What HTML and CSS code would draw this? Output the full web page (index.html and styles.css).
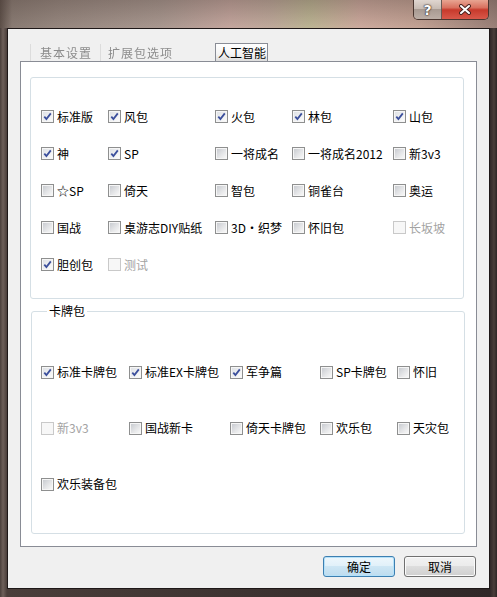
FILE: index.html
```html
<!DOCTYPE html>
<html lang="zh-CN">
<head>
    <meta charset="UTF-8">
    <title>选项</title>
    <link rel="stylesheet" href="styles.css">
</head>
<body>

<div class="window">
    <!-- 标题栏 -->
    <div class="titlebar">
        <div class="caption-buttons">
            <span class="cap help">?</span>
            <span class="cap close">
                <svg width="14" height="11" viewBox="0 0 14 11">
                    <path d="M3 2 L11 9 M11 2 L3 9" stroke="#4a2420" stroke-width="4" stroke-linecap="round"/>
                    <path d="M3 2 L11 9 M11 2 L3 9" stroke="#ffffff" stroke-width="2" stroke-linecap="round"/>
                </svg>
            </span>
        </div>
    </div>

    <div class="client">
        <!-- 标签页 -->
        <div class="tabs">
            <div class="tab ghost first">基本设置</div>
            <div class="tab ghost second">扩展包选项</div>
            <div class="tab current">人工智能</div>
        </div>

        <div class="pane">
            <!-- 扩展包 -->
            <div class="group packs">
                <label class="check on"><span class="box"><svg width="9" height="9" viewBox="0 0 9 9"><path d="M1.3 4.6 L3.4 7 L7.8 1.4" fill="none" stroke="#3b4f9c" stroke-width="1.8"/></svg></span>标准版</label>
                <label class="check on"><span class="box"><svg width="9" height="9" viewBox="0 0 9 9"><path d="M1.3 4.6 L3.4 7 L7.8 1.4" fill="none" stroke="#3b4f9c" stroke-width="1.8"/></svg></span>风包</label>
                <label class="check on"><span class="box"><svg width="9" height="9" viewBox="0 0 9 9"><path d="M1.3 4.6 L3.4 7 L7.8 1.4" fill="none" stroke="#3b4f9c" stroke-width="1.8"/></svg></span>火包</label>
                <label class="check on"><span class="box"><svg width="9" height="9" viewBox="0 0 9 9"><path d="M1.3 4.6 L3.4 7 L7.8 1.4" fill="none" stroke="#3b4f9c" stroke-width="1.8"/></svg></span>林包</label>
                <label class="check on"><span class="box"><svg width="9" height="9" viewBox="0 0 9 9"><path d="M1.3 4.6 L3.4 7 L7.8 1.4" fill="none" stroke="#3b4f9c" stroke-width="1.8"/></svg></span>山包</label>

                <label class="check on"><span class="box"><svg width="9" height="9" viewBox="0 0 9 9"><path d="M1.3 4.6 L3.4 7 L7.8 1.4" fill="none" stroke="#3b4f9c" stroke-width="1.8"/></svg></span>神</label>
                <label class="check on"><span class="box"><svg width="9" height="9" viewBox="0 0 9 9"><path d="M1.3 4.6 L3.4 7 L7.8 1.4" fill="none" stroke="#3b4f9c" stroke-width="1.8"/></svg></span>SP</label>
                <label class="check"><span class="box"></span>一将成名</label>
                <label class="check"><span class="box"></span>一将成名2012</label>
                <label class="check"><span class="box"></span>新3v3</label>

                <label class="check"><span class="box"></span>☆SP</label>
                <label class="check"><span class="box"></span>倚天</label>
                <label class="check"><span class="box"></span>智包</label>
                <label class="check"><span class="box"></span>铜雀台</label>
                <label class="check"><span class="box"></span>奥运</label>

                <label class="check"><span class="box"></span>国战</label>
                <label class="check"><span class="box"></span>桌游志DIY贴纸</label>
                <label class="check"><span class="box"></span>3D・织梦</label>
                <label class="check"><span class="box"></span>怀旧包</label>
                <label class="check disabled"><span class="box"></span>长坂坡</label>

                <label class="check on"><span class="box"><svg width="9" height="9" viewBox="0 0 9 9"><path d="M1.3 4.6 L3.4 7 L7.8 1.4" fill="none" stroke="#3b4f9c" stroke-width="1.8"/></svg></span>胆创包</label>
                <label class="check disabled"><span class="box"></span>测试</label>
            </div>

            <!-- 卡牌包 -->
            <fieldset class="group cards">
                <legend>卡牌包</legend>
                <label class="check on"><span class="box"><svg width="9" height="9" viewBox="0 0 9 9"><path d="M1.3 4.6 L3.4 7 L7.8 1.4" fill="none" stroke="#3b4f9c" stroke-width="1.8"/></svg></span>标准卡牌包</label>
                <label class="check on"><span class="box"><svg width="9" height="9" viewBox="0 0 9 9"><path d="M1.3 4.6 L3.4 7 L7.8 1.4" fill="none" stroke="#3b4f9c" stroke-width="1.8"/></svg></span>标准EX卡牌包</label>
                <label class="check on"><span class="box"><svg width="9" height="9" viewBox="0 0 9 9"><path d="M1.3 4.6 L3.4 7 L7.8 1.4" fill="none" stroke="#3b4f9c" stroke-width="1.8"/></svg></span>军争篇</label>
                <label class="check"><span class="box"></span>SP卡牌包</label>
                <label class="check"><span class="box"></span>怀旧</label>

                <label class="check disabled"><span class="box"></span>新3v3</label>
                <label class="check"><span class="box"></span>国战新卡</label>
                <label class="check"><span class="box"></span>倚天卡牌包</label>
                <label class="check"><span class="box"></span>欢乐包</label>
                <label class="check"><span class="box"></span>天灾包</label>

                <label class="check"><span class="box"></span>欢乐装备包</label>
            </fieldset>
        </div>

        <div class="buttons">
            <button class="btn default">确定</button>
            <button class="btn">取消</button>
        </div>
    </div>
</div>

</body>
</html>
```

FILE: styles.css
```css
/* 基本样式 */
body {
    margin: 0;
    padding: 0;
    font-family: "Noto Sans CJK SC", "DejaVu Sans", sans-serif;
    font-size: 12px;
    background: #2a2322;
}

/* 窗口外框 */
.window {
    width: 497px;
    height: 597px;
    box-sizing: border-box;
    padding: 0 7px 8px 7px;
    display: flex;
    flex-direction: column;
    background:
        linear-gradient(to bottom, rgba(70, 55, 50, 0.3), rgba(255, 255, 255, 0) 28px) 0 0 / 100% 28px no-repeat,
        linear-gradient(to right, #5c4f48 0, #8a7c74 12px, #978880 60px, #a99890 160px, #c4a69e 230px, #c0aa9c 270px, #bdb594 310px, #cdaa9e 360px, #c3a294 420px, #9a8078 497px) 0 0 / 100% 28px no-repeat,
        linear-gradient(to right, #4a3f3b 0, #6e605a 3px, #4a3e3a 7px, #302828 490px, #4a3e3a 494px, #2e2626 497px);
}

.titlebar {
    height: 28px;
    display: flex;
    justify-content: flex-end;
    align-items: flex-start;
    padding-right: 1px;
}

.caption-buttons {
    display: flex;
    height: 19px;
    border: 1px solid #4a3630;
    border-top: none;
    border-radius: 0 0 5px 5px;
    overflow: hidden;
}

.cap {
    display: flex;
    align-items: center;
    justify-content: center;
    height: 19px;
}

.help {
    width: 27px;
    border-right: 1px solid #6a5a54;
    background: linear-gradient(to bottom, #e0d6d0 0, #c8bcb4 45%, #a89a92 50%, #bcaea6 100%);
    color: #fff;
    font-family: "DejaVu Sans", sans-serif;
    font-weight: bold;
    font-size: 14px;
    text-shadow: 0 0 1px #3a2a26, 0 0 1px #3a2a26, 0 0 2px #3a2a26;
}

.close {
    width: 46px;
    background: linear-gradient(to bottom, #e8a592 0, #d9715f 40%, #c73a2c 52%, #d9584a 100%);
}

/* 客户区 */
.client {
    flex: 1;
    background: #f0f0f0;
    border: 1px solid #1e1818;
    padding: 14px 12px 11px 12px;
    display: flex;
    flex-direction: column;
}

/* 标签页 */
.tabs {
    display: flex;
    height: 18px;
    align-items: flex-end;
}

.tab {
    height: 17px;
    line-height: 17px;
    box-sizing: border-box;
    white-space: nowrap;
}

.tab.ghost {
    color: #8c8c8c;
    filter: blur(0.5px);
    border-left: 1px solid #dcdcdc;
    padding-left: 9px;
    letter-spacing: 1px;
}

.tab.first {
    margin-left: 10px;
    width: 70px;
}

.tab.second {
    width: 114px;
    padding-left: 7px;
}

.tab.current {
    width: 53px;
    height: 18px;
    line-height: 17px;
    margin-left: 1px;
    padding-left: 2px;
    border: 1px solid #898c95;
    border-bottom: none;
    background: linear-gradient(to bottom, #ffffff 0, #f4f4f4 60%, #dcdcdc 100%);
    color: #000;
}

.pane {
    height: 486px;
    box-sizing: border-box;
    background: #ffffff;
    border: 1px solid #898c95;
    padding: 15px 12px 12px 9px;
    display: flex;
    flex-direction: column;
}

/* 分组框 */
.group {
    border: 1px solid #d5dfe5;
    border-radius: 3px;
    box-shadow: inset 1px 1px 0 #ffffff;
    margin: 0;
    min-width: 0;
    display: grid;
    align-items: center;
}

.packs {
    height: 222px;
    box-sizing: border-box;
    padding: 20px 0 15px 10px;
    grid-template-columns: 67px 107px 77px 101px auto;
    grid-auto-rows: 37px;
}

.cards {
    height: 230px;
    box-sizing: border-box;
    margin-top: 5px;
    margin-left: 1px;
    margin-right: -1px;
    padding: 26px 0 21px 9px;
    grid-template-columns: 88px 101px 90px 77px auto;
    grid-auto-rows: 56px;
}

.cards legend {
    padding: 0 2px;
    margin-left: 6px;
    line-height: 14px;
    color: #000;
}

/* 复选框 */
.check {
    display: flex;
    align-items: center;
    white-space: nowrap;
    color: #000;
    line-height: 14px;
}

.box {
    width: 13px;
    height: 13px;
    box-sizing: border-box;
    border: 1px solid #8e8f8f;
    padding: 1px;
    margin-right: 3px;
    background: linear-gradient(135deg, #c9ccd1 0, #e4e5e7 55%, #f7f7f7 100%) content-box, #f6f6f6;
    flex-shrink: 0;
}

.box svg {
    display: block;
}

.check.on .box {
    background: linear-gradient(135deg, #dfe2e6 0, #eeeff1 55%, #fbfbfb 100%) content-box, #f6f6f6;
}

.check.disabled {
    color: #a3a3a3;
}

.check.disabled .box {
    border-color: #c9c9c9;
    background: #f7f7f7;
}

/* 底部按钮 */
.buttons {
    display: flex;
    justify-content: flex-end;
    gap: 9px;
    margin-top: 9px;
    padding-right: 1px;
}

.btn {
    width: 72px;
    height: 21px;
    padding: 0;
    font-family: "Noto Sans CJK SC", "DejaVu Sans", sans-serif;
    font-size: 12px;
    color: #000;
    border: 1px solid #707070;
    border-radius: 3px;
    background: linear-gradient(to bottom, #f2f2f2 0, #ebebeb 50%, #dddddd 50%, #cfcfcf 100%);
    box-shadow: inset 0 0 0 1px #fbfbfb;
}

.btn.default {
    border-color: #3c7fb1;
    background: linear-gradient(to bottom, #eef7fc 0, #e0f0f9 50%, #cde6f4 50%, #bedcef 100%);
    box-shadow: inset 0 0 0 1px #b5e1f9;
}
```
